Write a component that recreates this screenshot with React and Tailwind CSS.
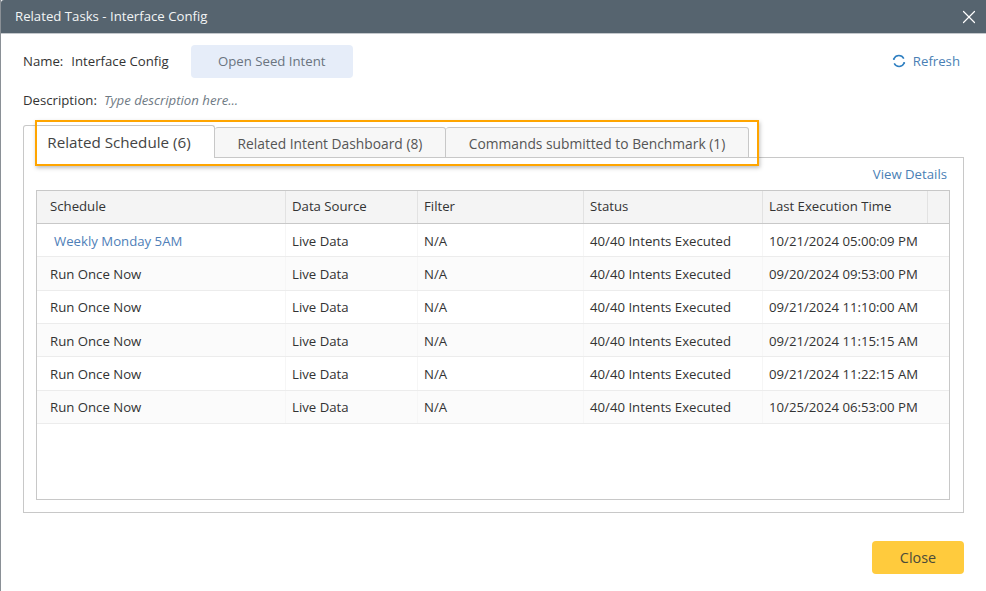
import React from "react";
import { X } from "lucide-react";

const rows = [
  ["Weekly Monday 5AM", "10/21/2024 05:00:09 PM"],
  ["Run Once Now", "09/20/2024 09:53:00 PM"],
  ["Run Once Now", "09/21/2024 11:10:00 AM"],
  ["Run Once Now", "09/21/2024 11:15:15 AM"],
  ["Run Once Now", "09/21/2024 11:22:15 AM"],
  ["Run Once Now", "10/25/2024 06:53:00 PM"],
];
const grid = "grid grid-cols-[249px_132px_166px_179px_165px_21px]";

export default function App() {
  return (
    <div className="w-[986px] h-[591px] overflow-hidden bg-white border-l border-[#8a9096] text-[13.2px] text-[#333] flex flex-col" style={{ fontFamily: '"Open Sans", sans-serif' }}>
      <div className="h-[34px] shrink-0 bg-[#56646f] border-b border-[#c4c8cc] flex items-center justify-between pl-[14px] pr-[6px] text-white rounded-tl-[3px]">
        <span className="text-[#f2f4f5]">Related Tasks - Interface Config</span>
        <X size={22} strokeWidth={1.3} />
      </div>
      <div className="flex-1 flex flex-col pl-[22px] pr-[22px]">
        <div className="flex items-center h-[33px] mt-[11px]">
          <span>Name:</span>
          <span className="ml-[8px]">Interface Config</span>
          <button className="ml-[22px] w-[162px] h-[33px] rounded-[4px] bg-[#e6edf9] text-[#6a7480] text-[13.2px]">Open Seed Intent</button>
          <div className="ml-auto flex items-center gap-[7px] text-[#4a7fb5] pr-[4px]">
            <svg width="14" height="14" viewBox="0 0 14 14" fill="none" stroke="#2f7fc1" strokeWidth="1.5">
              <path d="M2 4.6a5.5 5.5 0 0 1 9.8 0" />
              <path d="M12 9.4a5.5 5.5 0 0 1-9.8 0" />
              <circle cx="1.9" cy="5" r="1.1" fill="#2f7fc1" stroke="none" />
              <circle cx="12.1" cy="9" r="1.1" fill="#2f7fc1" stroke="none" />
            </svg>
            <span>Refresh</span>
          </div>
        </div>
        <div className="flex items-center h-[18px] mt-[14px]">
          <span>Description:</span>
          <span className="ml-[7px] italic text-[#6f7a84] text-[13.2px]">Type description here...</span>
        </div>
        <div className="relative mt-[15px]">
          <div className="flex h-[33px] -mb-px relative z-10">
            <div className="w-[192px] h-[33px] bg-white border border-b-0 border-[#c8c8c8] rounded-t-[3px] flex items-center justify-center text-[15.2px] text-[#444]">Related Schedule (6)</div>
            <div className="w-[231px] h-[31px] self-end bg-[#f7f7f7] border border-l-0 border-[#c8c8c8] rounded-t-[3px] flex items-center justify-center pt-[3px] text-[13.8px] text-[#555]">Related Intent Dashboard (8)</div>
            <div className="w-[303px] h-[31px] self-end bg-[#f7f7f7] border border-l-0 border-[#c8c8c8] rounded-t-[3px] flex items-center justify-center pt-[3px] text-[13.8px] text-[#555]">Commands submitted to Benchmark (1)</div>
          </div>
          <div className="absolute left-[12px] top-[-5px] w-[724px] h-[46px] border-[2px] border-[#ffa500] shadow-[1px_2px_4px_rgba(0,0,0,0.25)] z-20 pointer-events-none"></div>
          <div className="h-[356px] border border-[#c8c8c8] px-[12px] flex flex-col">
            <div className="h-[32px] flex items-center justify-end pr-[4px] pt-[1px] text-[#4a7fb5]">View Details</div>
            <div className="h-[310px] w-[914px] border-[1.5px] border-[#c8c8c8]">
              <div className={`${grid} h-[33px] bg-[#f4f4f4] border-b-[1.5px] border-[#c8c8c8]`}>
                {["Schedule", "Data Source", "Filter", "Status", "Last Execution Time", ""].map((h, i) => (
                  <div key={i} className={`flex items-center pr-1 ${i < 5 ? "border-r border-[#e2e2e2]" : ""} ${i > 0 ? "pl-[6px]" : "pl-[13px]"}`}>{h}</div>
                ))}
              </div>
              {rows.map(([name, time], i) => (
                <div key={i} className={`${grid} h-[33.33px] border-b border-[#ececec] ${i % 2 ? "bg-[#fbfbfb]" : "bg-white"}`}>
                  <div className={`flex items-center pt-[3px] border-r border-[#f6f6f6] ${i === 0 ? "pl-[17px] text-[#4f80b8]" : "pl-[13px]"}`}>{name}</div>
                  <div className="flex items-center pt-[3px] pl-[6px] border-r border-[#f6f6f6]">Live Data</div>
                  <div className="flex items-center pt-[3px] pl-[6px] border-r border-[#f6f6f6]">N/A</div>
                  <div className="flex items-center pt-[3px] pl-[6px] border-r border-[#f6f6f6]">40/40 Intents Executed</div>
                  <div className="flex items-center pt-[3px] pl-[6px] col-span-2 whitespace-nowrap">{time}</div>
                </div>
              ))}
            </div>
          </div>
        </div>
        <div className="flex justify-end mt-[28px]">
          <button className="w-[92px] h-[33px] rounded-[4px] bg-[#ffcb3d] text-[#4a4a3a] text-[14.4px]">Close</button>
        </div>
      </div>
    </div>
  );
}
